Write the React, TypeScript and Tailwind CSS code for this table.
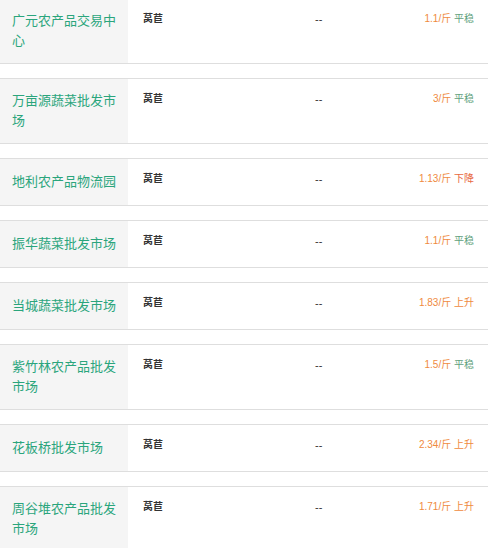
const rows = [
  { name: "广元农产品交易中心", price: "1.1", trend: "平稳" },
  { name: "万亩源蔬菜批发市场", price: "3", trend: "平稳" },
  { name: "地利农产品物流园", price: "1.13", trend: "下降" },
  { name: "振华蔬菜批发市场", price: "1.1", trend: "平稳" },
  { name: "当城蔬菜批发市场", price: "1.83", trend: "上升" },
  { name: "紫竹林农产品批发市场", price: "1.5", trend: "平稳" },
  { name: "花板桥批发市场", price: "2.34", trend: "上升" },
  { name: "周谷堆农产品批发市场", price: "1.71", trend: "上升" },
];

const trendColor: Record<string, string> = {
  平稳: "text-[#5f9f7c]",
  下降: "text-[#e8693f]",
  上升: "text-[#ef8a3e]",
};

export default function App() {
  return (
    <div
      className="w-[488px] h-[548px] overflow-hidden bg-white"
      style={{ fontFamily: '"Liberation Sans", "Noto Sans CJK SC", sans-serif' }}
    >
      <div className="mt-[-2px] flex flex-col gap-[14px]">
        {rows.map((row) => (
          <div key={row.name} className="flex border-y border-[#dedede] min-h-[48px]">
            <div className="w-[128px] shrink-0 bg-[#f5f5f5] px-[12px] py-[12px] flex items-center">
              <span className="text-[13px] leading-[20px] text-[#2aa57c]">{row.name}</span>
            </div>
            <div className="w-[187px] shrink-0 pl-[15px] pt-[11px] text-[10px] leading-[18px] font-bold text-[#333]">
              莴苣
            </div>
            <div className="pt-[11px] text-[11px] leading-[18px] text-[#333]">--</div>
            <div className="flex-1 pt-[11px] pr-[14px] text-right text-[10px] leading-[18px]">
              <span className="text-[#ef8a3e]">{row.price}/斤</span>{" "}
              <span className={trendColor[row.trend]}>{row.trend}</span>
            </div>
          </div>
        ))}
      </div>
    </div>
  );
}
